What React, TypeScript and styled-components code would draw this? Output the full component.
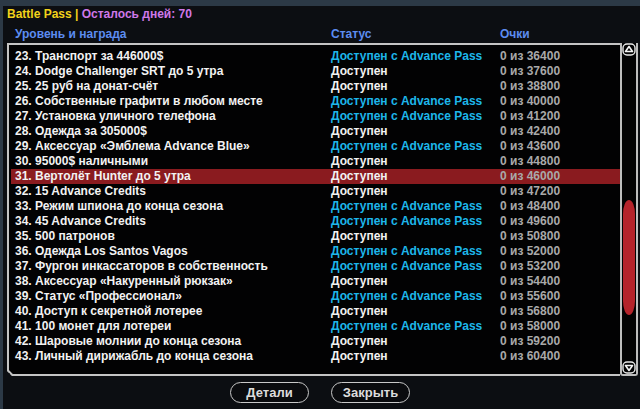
import React from "react";
import styled, { createGlobalStyle } from "styled-components";

const Global = createGlobalStyle`
  html, body { margin: 0; padding: 0; }
  body {
    width: 640px; height: 409px; overflow: hidden;
    background: #2c3946;
    font-family: "Liberation Sans", Arial, sans-serif;
  }
`;

type Row = { n: number; name: string; adv: boolean; pts: number };

const rows: Row[] = [
  { n: 23, name: "Транспорт за 446000$", adv: true, pts: 36400 },
  { n: 24, name: "Dodge Challenger SRT до 5 утра", adv: false, pts: 37600 },
  { n: 25, name: "25 руб на донат-счёт", adv: false, pts: 38800 },
  { n: 26, name: "Собственные графити в любом месте", adv: true, pts: 40000 },
  { n: 27, name: "Установка уличного телефона", adv: true, pts: 41200 },
  { n: 28, name: "Одежда за 305000$", adv: false, pts: 42400 },
  { n: 29, name: "Аксессуар «Эмблема Advance Blue»", adv: true, pts: 43600 },
  { n: 30, name: "95000$ наличными", adv: false, pts: 44800 },
  { n: 31, name: "Вертолёт Hunter до 5 утра", adv: false, pts: 46000 },
  { n: 32, name: "15 Advance Credits", adv: false, pts: 47200 },
  { n: 33, name: "Режим шпиона до конца сезона", adv: true, pts: 48400 },
  { n: 34, name: "45 Advance Credits", adv: true, pts: 49600 },
  { n: 35, name: "500 патронов", adv: false, pts: 50800 },
  { n: 36, name: "Одежда Los Santos Vagos", adv: true, pts: 52000 },
  { n: 37, name: "Фургон инкассаторов в собственность", adv: true, pts: 53200 },
  { n: 38, name: "Аксессуар «Накуренный рюкзак»", adv: false, pts: 54400 },
  { n: 39, name: "Статус «Профессионал»", adv: true, pts: 55600 },
  { n: 40, name: "Доступ к секретной лотерее", adv: false, pts: 56800 },
  { n: 41, name: "100 монет для лотереи", adv: true, pts: 58000 },
  { n: 42, name: "Шаровые молнии до конца сезона", adv: false, pts: 59200 },
  { n: 43, name: "Личный дирижабль до конца сезона", adv: false, pts: 60400 },
];

const Window = styled.div`
  margin: 6px 0 0 3px;
  height: 403px;
  background: #0c0e12;
  display: flex;
  flex-direction: column;
`;

const Title = styled.div`
  padding: 1px 0 0 4px;
  height: 15px;
  font-size: 12px;
  font-weight: bold;
  line-height: 15px;
  color: #f2d21a;
`;

const Days = styled.span`
  color: #cf78e8;
`;

const Header = styled.div`
  display: grid;
  grid-template-columns: 316px 169px 1fr;
  padding: 5px 0 0 12px;
  height: 15px;
  font-size: 12px;
  font-weight: bold;
  line-height: 15px;
  color: #5c8cf0;
`;

const ListArea = styled.div`
  display: flex;
  margin: 1px 0 0 4px;
  height: 333px;
`;

const ListBox = styled.div`
  position: relative;
  width: 613px;
  background: #020203;
  border: 2px solid #c4c4c4;
  border-right: none;
  padding: 4px 0 0 2px;
  box-sizing: border-box;
  clip-path: polygon(0 0, 100% 0, 100% 100%, 5px 100%, 0 calc(100% - 5px));
`;

const Corner = styled.div`
  position: absolute;
  left: -2px;
  bottom: -2px;
  width: 9px;
  height: 2px;
  background: #c4c4c4;
  transform-origin: left bottom;
  transform: translate(0px, -5px) rotate(45deg);
`;

const RowLine = styled.div<{ $sel?: boolean }>`
  display: grid;
  grid-template-columns: 316px 169px 1fr;
  height: 15px;
  line-height: 15px;
  font-size: 12px;
  font-weight: bold;
  padding-left: 4px;
  background: ${(p) => (p.$sel ? "#8a1b1f" : "transparent")};
  color: #f2f2f2;
  white-space: nowrap;
`;

const Status = styled.span<{ $adv: boolean }>`
  color: ${(p) => (p.$adv ? "#1db6ea" : "#f2f2f2")};
`;

const Points = styled.span`
  color: #a9a9a9;
`;

const Scrollbar = styled.div`
  position: relative;
  width: 14px;
  border-left: 2px solid #bdbdbd;
  border-right: 2px solid #bdbdbd;
  border-bottom: 2px solid #bdbdbd;
  border-radius: 0 0 3px 3px;
  background: #020203;
  display: flex;
  flex-direction: column;
  justify-content: space-between;
  align-items: center;
`;

const Thumb = styled.div`
  position: absolute;
  left: 1px;
  right: 1px;
  background: #b5232b;
  border-radius: 6px 6px 6px 6px / 14px 14px 14px 14px;
`;

const Arrow = styled.svg`
  display: block;
  width: 14px;
  height: 13px;
`;

const Footer = styled.div`
  display: flex;
  justify-content: center;
  gap: 22px;
  padding-top: 6px;
  margin-left: -3px;
`;

const Btn = styled.div`
  width: 79px;
  height: 21px;
  box-sizing: border-box;
  border: 1.5px solid #c8c8c8;
  border-radius: 11px;
  background: #0a0b0e;
  color: #dcdcdc;
  font-size: 13px;
  font-weight: bold;
  display: flex;
  align-items: center;
  justify-content: center;
`;

function ArrowIcon({ up }: { up: boolean }) {
  return (
    <Arrow viewBox="0 0 14 13">
      <rect x="1" y="1" width="12" height="11" rx="4" fill="none" stroke="#e8e8e8" strokeWidth="1.4" />
      {up ? (
        <path d="M7 3.5 L10.5 8.5 L3.5 8.5 Z" fill="none" stroke="#f4f4f4" strokeWidth="1.6" strokeLinejoin="round" />
      ) : (
        <path d="M3.5 4.5 L10.5 4.5 L7 9.5 Z" fill="none" stroke="#f4f4f4" strokeWidth="1.6" strokeLinejoin="round" />
      )}
    </Arrow>
  );
}

export default function App() {
  const thumbTop = 157;
  const thumbHeight = 115;
  return (
    <>
      <Global />
      <Window>
        <Title>
          Battle Pass | <Days>Осталось дней: 70</Days>
        </Title>
        <Header>
          <span>Уровень и награда</span>
          <span>Статус</span>
          <span>Очки</span>
        </Header>
        <ListArea>
          <ListBox>
            {rows.map((r) => (
              <RowLine key={r.n} $sel={r.n === 31}>
                <span>
                  {r.n}. {r.name}
                </span>
                <Status $adv={r.adv}>{r.adv ? "Доступен с Advance Pass" : "Доступен"}</Status>
                <Points>0 из {r.pts}</Points>
              </RowLine>
            ))}
            <Corner />
          </ListBox>
          <Scrollbar>
            <ArrowIcon up />
            <Thumb style={{ top: thumbTop, height: thumbHeight }} />
            <ArrowIcon up={false} />
          </Scrollbar>
        </ListArea>
        <Footer>
          <Btn>Детали</Btn>
          <Btn>Закрыть</Btn>
        </Footer>
      </Window>
    </>
  );
}
